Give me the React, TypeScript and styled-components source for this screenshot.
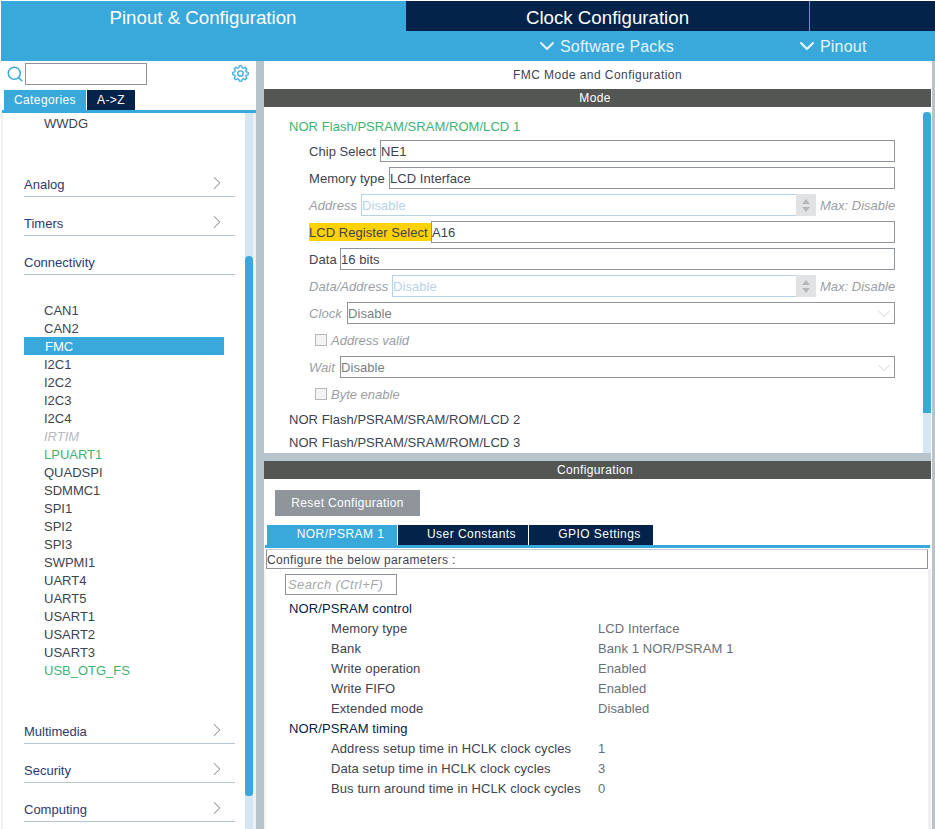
import React from 'react';
import styled, { createGlobalStyle } from 'styled-components';
import { ChevronDown, ChevronRight, Search } from 'lucide-react';

const Global = createGlobalStyle`
  html, body { margin: 0; padding: 0; background: #fff; overflow: hidden; }
  body { font-family: "Liberation Sans", Arial, sans-serif; font-size: 13px; color: #3d4350; }
  * { box-sizing: border-box; }
`;

const BLUE = '#39a9dc';
const NAVY = '#03234b';
const SPLIT = '#b8c4cb';

const Page = styled.div`
  width: 935px; height: 829px; padding: 1px 0 0 1px; overflow: hidden;
  display: flex; flex-direction: column;
`;
const Header = styled.header`
  height: 60px; flex: none; background: ${BLUE}; display: flex; flex-direction: column;
`;
const MainTabs = styled.div`display: flex; height: 30px; gap: 1px;`;
const MainTab = styled.div<{ $w: number; $active?: boolean }>`
  width: ${p => p.$w}px; background: ${p => (p.$active ? BLUE : NAVY)};
  color: #fff; font-size: 18.7px; line-height: 30px; text-align: center; padding-top: 2px; flex: none;
`;
const SubBar = styled.div`display: flex; height: 30px; align-items: center; color: #e6f4fb; font-size: 16px; letter-spacing: .2px; padding-top: 2px;`;
const SubItem = styled.div<{ $left: number }>`
  display: flex; align-items: center; margin-left: ${p => p.$left}px;
  svg { flex: none; margin: -2px 1px 0 0; }
`;
const Body = styled.div`flex: 1; display: flex; min-height: 0;`;

const Left = styled.aside`width: 255px; flex: none; display: flex; flex-direction: column; min-height: 0;`;
const SearchRow = styled.div`
  height: 29px; flex: none; display: flex; align-items: flex-start; padding: 2px 7px 0 5px; color: ${BLUE};
  svg { margin-top: 2px; flex: none; }
`;
const SearchInput = styled.div`
  width: 122px; height: 22px; border: 1px solid #8f959b; margin-left: 1px; margin-right: auto;
`;
const LeftTabs = styled.div`height: 20px; flex: none; display: flex; gap: 1px; padding-left: 3px;`;
const LeftTab = styled.div<{ $w: number; $active?: boolean }>`
  width: ${p => p.$w}px; background: ${p => (p.$active ? BLUE : NAVY)}; color: #fff;
  font-size: 12px; letter-spacing: .4px; line-height: 20px; text-align: center;
`;
const BlueRule = styled.div`height: 3px; flex: none; background: ${BLUE}; margin-left: 1px;`;
const ListFrame = styled.div`flex: 1; min-height: 0; display: flex; background: #f0f0f0; padding-left: 2px;`;
const List = styled.div`flex: 1; background: #fff; padding: 1px 0 0 21px; overflow: hidden;`;
const Track = styled.div`width: 8px; flex: none; background: #d6e6f4; margin-right: 3px; padding-top: 143px;`;
const Thumb = styled.div<{ $h: number }>`width: 8px; height: ${p => p.$h}px; background: ${BLUE}; border-radius: 4px 4px 3px 3px;`;
const Category = styled.div<{ $top?: number }>`
  width: 211px; height: 39px; border-bottom: 1px solid ${SPLIT}; display: flex; align-items: flex-end;
  justify-content: space-between; padding: 0 7px 4px 0; color: #2d3a6e; font-size: 13px;
  margin-top: ${p => p.$top ?? 0}px;
  svg { color: #8a8f95; margin-bottom: -2px; }
`;
const Peripheral = styled.div<{ $tone?: string; $selected?: boolean }>`
  height: 18px; line-height: 20px; width: 200px; padding-left: ${p => (p.$selected ? 21 : 20)}px; font-size: 13px;
  color: ${p => p.$selected ? '#fff' : p.$tone === 'green' ? '#3fb36f' : p.$tone === 'off' ? '#b7bbc0' : '#3d4350'};
  background: ${p => (p.$selected ? BLUE : 'transparent')};
  font-style: ${p => (p.$tone === 'off' ? 'italic' : 'normal')};
`;
const Group = styled.div<{ $top: number; $bottom: number }>`
  padding: ${p => p.$top}px 0 ${p => p.$bottom}px;
`;

const Splitter = styled.div`width: 8px; flex: none; background: ${SPLIT};`;
const Right = styled.main`width: 668px; flex: none; display: flex; flex-direction: column; min-height: 0; background: #fff; padding-right: 1px;`;
const Gutter = styled.div`flex: 1; background: ${SPLIT};`;
const PanelTitle = styled.div`height: 28px; flex: none; text-align: center; line-height: 29px; font-size: 12px; letter-spacing: .45px; color: #3d4350;`;
const Bar = styled.div`height: 18px; flex: none; background: #545654; color: #fff; font-size: 12px; letter-spacing: .35px; line-height: 18px; text-align: center; padding-right: 5px;`;
const ModePane = styled.div`height: 346px; flex: none; display: flex; overflow: hidden;`;
const ModeBody = styled.div`flex: 1; padding: 8px 0 0 25px;`;
const PaneScroll = styled.div`width: 8px; flex: none; margin-top: 5px; background: #d6e6f4;`;
const ModeThumb = styled.div`height: 301px; background: ${BLUE}; border-radius: 4px 4px 0 0;`;
const Heading = styled.div<{ $green?: boolean; $top?: number }>`
  height: 22px; line-height: 24px; font-size: 13px; letter-spacing: .05px; margin-top: ${p => p.$top ?? 0}px;
  color: ${p => (p.$green ? '#3fb36f' : '#3d4350')};
`;
const Fields = styled.div`padding: 3px 0 0 20px; width: 606px; display: flex; flex-direction: column; gap: 5px;`;
const FieldRow = styled.div`display: flex; height: 22px; align-items: stretch;`;
const Label = styled.div<{ $w: number; $off?: boolean; $hl?: boolean }>`
  width: ${p => p.$w}px; flex: none; line-height: 24px; font-size: 13px; letter-spacing: .05px; white-space: nowrap;
  color: ${p => (p.$off ? '#9a9ea4' : '#3d4350')};
  font-style: ${p => (p.$off ? 'italic' : 'normal')};
  ${p => p.$hl ? 'background: #ffd200; height: 18px; line-height: 20px; align-self: center;' : ''}
`;
const Field = styled.div<{ $off?: boolean; $muted?: boolean }>`
  flex: 1; min-width: 0; border: 1px solid ${p => (p.$off ? '#b8d2e8' : '#8f959b')};
  ${p => p.$off ? 'border-right: 0;' : ''}
  color: ${p => (p.$off ? '#b8d2e8' : p.$muted ? '#7a7f85' : '#3d4350')};
  font-size: 13px; letter-spacing: .05px; line-height: 18px; padding: 2px 0 0 0; display: flex; align-items: center; justify-content: space-between;
`;
const Spinner = styled.div`
  width: 20px; flex: none; background: #e0e2e4; display: flex; flex-direction: column; align-items: center; justify-content: center; gap: 3px;
`;
const Tri = styled.div<{ $up?: boolean }>`
  width: 0; height: 0; border-left: 4px solid transparent; border-right: 4px solid transparent;
  ${p => p.$up ? 'border-bottom: 5px solid #b4b8bb;' : 'border-top: 5px solid #b4b8bb;'}
`;
const MaxNote = styled.div`width: 79px; flex: none; padding-left: 4px; font-style: italic; color: #9a9ea4; font-size: 13px; line-height: 24px; white-space: nowrap;`;
const FieldChevron = styled.span`display: flex; color: #c4c7ca; height: 18px; align-items: center;`;
const CheckRow = styled.div`height: 22px; display: flex; align-items: center; gap: 4px; padding-left: 6px; color: #9a9ea4; font-style: italic; font-size: 13px;`;
const CheckBox = styled.div`width: 12px; height: 12px; border: 1px solid #b4b8bb; background: #f4f4f4;`;
const HSplit = styled.div`height: 8px; flex: none; background: ${SPLIT};`;
const ConfigPane = styled.div`flex: 1; min-height: 0; padding: 11px 0 0 1px; display: flex; flex-direction: column;`;
const ResetButton = styled.div`
  width: 145px; height: 26px; flex: none; margin-left: 10px; background: #8f959b; color: #fff; font-size: 12px; letter-spacing: .33px;
  line-height: 27px; text-align: center;
`;
const ConfigTabs = styled.div`display: flex; flex: none; gap: 1px; margin-top: 9px; padding-left: 2px; height: 20px;`;
const ConfigTab = styled.div<{ $w: number; $active?: boolean }>`
  width: ${p => p.$w}px; background: ${p => (p.$active ? BLUE : NAVY)}; color: #fff; font-size: 12px; letter-spacing: .45px; line-height: 19px; text-align: center; padding-left: 17px;
`;
const ConfigRule = styled.div`height: 3px; flex: none; background: ${BLUE}; width: 665px;`;
const ConfigureBox = styled.div`
  width: 662px; height: 20px; flex: none; margin: 1px 0 0 1px; border: 1px solid #8f959b; border-top-color: #c8ccd0; font-size: 12px; letter-spacing: .35px; line-height: 20px;
`;
const ConfigScroll = styled.div`
  flex: 1; min-height: 0; margin-left: -1px; border-left: 2px solid #f4f4f4; border-right: 3px solid #f0f0f0;
`;
const SearchBox = styled.div`
  width: 112px; height: 21px; margin: 5px 0 0 19px; border: 1px solid #8f959b; color: #a4a8ad; font-size: 13px; font-style: italic; letter-spacing: .4px; line-height: 19px; padding-left: 2px;
`;
const Tree = styled.div`padding: 4px 0 0 23px;`;
const TreeHead = styled.div`height: 20px; line-height: 20px; font-size: 13px; letter-spacing: .1px; color: #03234b;`;
const TreeRow = styled.div`display: grid; grid-template-columns: 267px 1fr; height: 20px; line-height: 20px; padding-left: 42px; font-size: 13px; letter-spacing: .1px; color: #3d4350;`;
const TreeValue = styled.span`color: #6a6f75;`;

const peripherals: [string, string?][] = [
  ['CAN1'], ['CAN2'], ['FMC', 'sel'], ['I2C1'], ['I2C2'], ['I2C3'], ['I2C4'], ['IRTIM', 'off'],
  ['LPUART1', 'green'], ['QUADSPI'], ['SDMMC1'], ['SPI1'], ['SPI2'], ['SPI3'], ['SWPMI1'],
  ['UART4'], ['UART5'], ['USART1'], ['USART2'], ['USART3'], ['USB_OTG_FS', 'green'],
];
const control = [
  ['Memory type', 'LCD Interface'], ['Bank', 'Bank 1 NOR/PSRAM 1'], ['Write operation', 'Enabled'],
  ['Write FIFO', 'Enabled'], ['Extended mode', 'Disabled'],
];
const timing = [
  ['Address setup time in HCLK clock cycles', '1'], ['Data setup time in HCLK clock cycles', '3'],
  ['Bus turn around time in HCLK clock cycles', '0'],
];

const gearPath = (() => {
  const teeth = 8;
  const pts: string[] = [];
  for (let i = 0; i < teeth; i++) {
    const a = (i / teeth) * Math.PI * 2;
    const step = (Math.PI * 2) / teeth;
    const add = (r: number, o: number) => {
      const x = 10 + r * Math.cos(a + o * step);
      const y = 10 + r * Math.sin(a + o * step);
      pts.push(`${x.toFixed(2)} ${y.toFixed(2)}`);
    };
    add(7, -0.34);
    add(9.2, -0.2);
    add(9.2, 0.2);
    add(7, 0.34);
  }
  return `M${pts.join('L')}Z`;
})();

const Gear = () => (
  <svg width="17" height="17" viewBox="0 0 20 20" fill="none" stroke="currentColor" strokeWidth="1.5" strokeLinejoin="round">
    <path d={gearPath} />
    <circle cx="10" cy="10" r="3.2" />
  </svg>
);

const Select = ({ value }: { value: string }) => (
  <Field $muted>
    <span>{value}</span>
    <FieldChevron><ChevronDown size={20} strokeWidth={1} /></FieldChevron>
  </Field>
);

const CatChevron = () => <ChevronRight size={22} strokeWidth={1.1} />;

export default function App() {
  return (
    <Page>
      <Global />
      <Header>
        <MainTabs>
          <MainTab $w={404} $active>Pinout &amp; Configuration</MainTab>
          <MainTab $w={403}>Clock Configuration</MainTab>
          <MainTab $w={125} />
        </MainTabs>
        <SubBar>
          <SubItem $left={534}><ChevronDown size={24} strokeWidth={2.1} />Software Packs</SubItem>
          <SubItem $left={121}><ChevronDown size={24} strokeWidth={2.1} />Pinout</SubItem>
        </SubBar>
      </Header>
      <Body>
        <Left>
          <SearchRow>
            <Search size={18} strokeWidth={2} />
            <SearchInput />
            <Gear />
          </SearchRow>
          <LeftTabs>
            <LeftTab $w={82} $active>Categories</LeftTab>
            <LeftTab $w={48}>A-&gt;Z</LeftTab>
          </LeftTabs>
          <BlueRule />
          <ListFrame>
            <List>
              <Peripheral>WWDG</Peripheral>
              <Category $top={26}>Analog<CatChevron /></Category>
              <Category>Timers<CatChevron /></Category>
              <Category>Connectivity</Category>
              <Group $top={26} $bottom={26}>
                {peripherals.map(([name, tone]) => (
                  <Peripheral key={name} $tone={tone} $selected={tone === 'sel'}>{name}</Peripheral>
                ))}
              </Group>
              <Category>Multimedia<CatChevron /></Category>
              <Category>Security<CatChevron /></Category>
              <Category>Computing<CatChevron /></Category>
            </List>
            <Track><Thumb $h={540} /></Track>
          </ListFrame>
        </Left>
        <Splitter />
        <Right>
          <PanelTitle>FMC Mode and Configuration</PanelTitle>
          <Bar>Mode</Bar>
          <ModePane>
            <ModeBody>
              <Heading $green>NOR Flash/PSRAM/SRAM/ROM/LCD 1</Heading>
              <Fields>
                <FieldRow><Label $w={71}>Chip Select</Label><Field>NE1</Field></FieldRow>
                <FieldRow><Label $w={80}>Memory type</Label><Field>LCD Interface</Field></FieldRow>
                <FieldRow>
                  <Label $w={52} $off>Address</Label><Field $off>Disable</Field>
                  <Spinner><Tri $up /><Tri /></Spinner><MaxNote>Max: Disable</MaxNote>
                </FieldRow>
                <FieldRow><Label $w={122} $hl>LCD Register Select</Label><Field>A16</Field></FieldRow>
                <FieldRow><Label $w={31}>Data</Label><Field>16 bits</Field></FieldRow>
                <FieldRow>
                  <Label $w={83} $off>Data/Address</Label><Field $off>Disable</Field>
                  <Spinner><Tri $up /><Tri /></Spinner><MaxNote>Max: Disable</MaxNote>
                </FieldRow>
                <FieldRow><Label $w={38} $off>Clock</Label><Select value="Disable" /></FieldRow>
                <CheckRow><CheckBox />Address valid</CheckRow>
                <FieldRow><Label $w={31} $off>Wait</Label><Select value="Disable" /></FieldRow>
                <CheckRow><CheckBox />Byte enable</CheckRow>
              </Fields>
              <Heading $top={3}>NOR Flash/PSRAM/SRAM/ROM/LCD 2</Heading>
              <Heading $top={1}>NOR Flash/PSRAM/SRAM/ROM/LCD 3</Heading>
            </ModeBody>
            <PaneScroll><ModeThumb /></PaneScroll>
          </ModePane>
          <HSplit />
          <Bar>Configuration</Bar>
          <ConfigPane>
            <ResetButton>Reset Configuration</ResetButton>
            <ConfigTabs>
              <ConfigTab $w={130} $active>NOR/PSRAM 1</ConfigTab>
              <ConfigTab $w={130}>User Constants</ConfigTab>
              <ConfigTab $w={124}>GPIO Settings</ConfigTab>
            </ConfigTabs>
            <ConfigRule />
            <ConfigureBox>Configure the below parameters :</ConfigureBox>
            <ConfigScroll>
              <SearchBox>Search (Ctrl+F)</SearchBox>
              <Tree>
                <TreeHead>NOR/PSRAM control</TreeHead>
                {control.map(([k, v]) => <TreeRow key={k}><span>{k}</span><TreeValue>{v}</TreeValue></TreeRow>)}
                <TreeHead>NOR/PSRAM timing</TreeHead>
                {timing.map(([k, v]) => <TreeRow key={k}><span>{k}</span><TreeValue>{v}</TreeValue></TreeRow>)}
              </Tree>
            </ConfigScroll>
          </ConfigPane>
        </Right>
        <Gutter />
      </Body>
    </Page>
  );
}
